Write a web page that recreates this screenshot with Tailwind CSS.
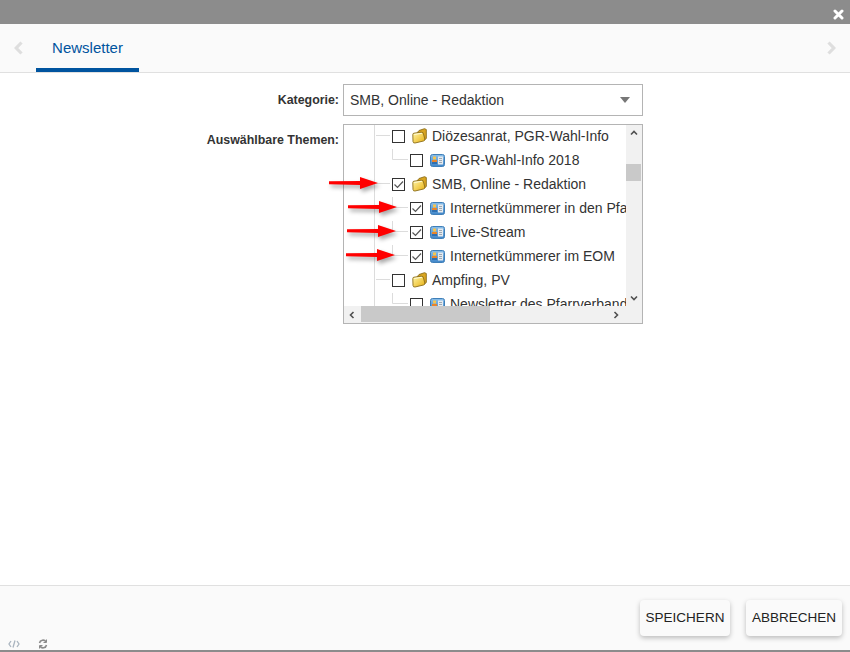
<!DOCTYPE html>
<html><head><meta charset="utf-8"><title>Newsletter</title>
<script src="https://cdn.jsdelivr.net/npm/@tailwindcss/browser@4"></script></head>
<body class="m-0 overflow-hidden bg-white">
<svg width="0" height="0" class="absolute"><defs>
<linearGradient id="fg" x1="0" y1="0" x2="1" y2="1"><stop offset="0" stop-color="#fff6a8"/><stop offset="1" stop-color="#e8b010"/></linearGradient>
<linearGradient id="bg" x1="0" y1="0" x2="0" y2="1"><stop offset="0" stop-color="#8cc0ea"/><stop offset="1" stop-color="#3f85c8"/></linearGradient>
<symbol id="folder" viewBox="0 0 15 16"><path d="M5 5 L7 2.500 L12.500 .7 L14.300 1.500 L14.300 10.500 L12.500 12 Z" fill="#d9a520" stroke="#8a6c18" stroke-width=".9"/><path d="M.8 6.500 Q.8 5.300 2 5.200 L9 4.200 Q11.500 4 11.500 6 L12.800 11 Q12.800 12.800 11.500 13 L3 15 Q1.200 15.300 1 13.500 Z" fill="url(#fg)" stroke="#8a6c18" stroke-width=".9"/><path d="M2.200 6.500 L10 5.300" stroke="#fffbd8" stroke-width="1"/></symbol>
<symbol id="nl" viewBox="0 0 15 13"><rect x="0.5" y="0.5" width="14" height="12" rx="2" fill="url(#bg)" stroke="#3f7fb8"/><rect x="8" y="2.500" width="5" height="8" fill="#e6eaee"/><path d="M9 4.500h3M9 6.500h3M9 8.500h3" stroke="#9aa8b4"/><rect x="3" y="2.500" width="3" height="3" fill="#f6c550"/><rect x="2" y="6" width="5" height="2" fill="#e8842c"/><rect x="2" y="8" width="5" height="2" fill="#2f6fb0"/></symbol>
<symbol id="chk" viewBox="0 0 13 13"><path d="M2.500 6.500 L5.500 9.500 L11 3.500" fill="none" stroke="#555" stroke-width="1.2"/></symbol>
<symbol id="arrow" viewBox="0 0 50 14"><path d="M0 5.300L31 5V1l18 6-18 6V9L0 8.300z" fill="#f00"/></symbol>
</defs></svg>

<div class="relative flex flex-col w-[850px] h-[652px] font-['Liberation_Sans',Arial,sans-serif] text-[#333]">
  <div class="h-6 shrink-0 bg-[#8c8c8c] relative">
    <svg class="absolute left-[833px] top-[9px]" width="11" height="11" viewBox="0 0 11 11"><path d="M2 2l7 7M9 2l-7 7" stroke="#fff" stroke-width="3" stroke-linecap="round"/></svg>
  </div>
  <div class="h-[49px] shrink-0 bg-[#fafafa] border-b border-[#e0e0e0] flex items-stretch justify-between">
    <div class="flex items-stretch">
      <svg class="ml-[14px] mt-[17px]" width="9" height="14" viewBox="0 0 9 14"><path d="M7.500 1.500L2.200 7l5.300 5.500" fill="none" stroke="#dedede" stroke-width="3.200"/></svg>
      <div class="ml-[13px] w-[103px] h-12 border-b-4 border-[#00549f] text-[#00549f] text-[15px] flex items-center justify-center pt-[5px]">Newsletter</div>
    </div>
    <svg class="mr-[14px] mt-[17px]" width="9" height="14" viewBox="0 0 9 14"><path d="M1.500 1.500L6.800 7l-5.300 5.500" fill="none" stroke="#dedede" stroke-width="3.200"/></svg>
  </div>

  <main class="flex-1 pt-[11px]">
    <div class="flex h-8">
      <div class="w-[339px] text-right text-[12.4px] font-bold leading-8 pb-1">Kategorie:</div>
      <div class="ml-1 w-[300px] border border-[#b4b4b4] flex items-center justify-between pl-1.5 pr-3 text-sm">
        <span>SMB, Online - Redaktion</span>
        <span class="w-0 h-0 border-x-[5px] border-t-[6px] border-x-transparent border-t-[#777]"></span>
      </div>
    </div>
    <div class="flex mt-2">
      <div class="w-[339px] text-right text-[12.4px] font-bold leading-[32px]">Auswählbare Themen:</div>
      <div class="relative ml-1 w-[300px] h-[200px] border border-[#b4b4b4] text-sm">
        <div class="absolute left-0 top-0 w-[282px] h-[181px] overflow-hidden">
          <svg class="absolute left-0 top-0" width="90" height="181" fill="none" stroke="#dcdcdc"><path d="M30.500 0V181M32 10.500H46M48.500 24V34.500H64M32 58.500H46M48.500 72V82.500H64M48.500 96V106.500H64M48.500 120V130.500H64M32 154.500H46M48.500 168V178.500H64"/></svg>
          <div class="relative -mt-px">
            <div class="flex items-center h-6 pl-12"><span class="shrink-0 w-[13px] h-[13px] border border-[#333] bg-white"></span><svg class="shrink-0 ml-[7px] mr-[5px]" width="15" height="16"><use href="#folder"/></svg><span class="whitespace-nowrap">Diözesanrat, PGR-Wahl-Info</span></div>
            <div class="flex items-center h-6 pl-[66px]"><span class="shrink-0 w-[13px] h-[13px] border border-[#333] bg-white"></span><svg class="shrink-0 ml-[7px] mr-[5px]" width="15" height="13"><use href="#nl"/></svg><span class="whitespace-nowrap">PGR-Wahl-Info 2018</span></div>
            <div class="flex items-center h-6 pl-12"><span class="shrink-0 w-[13px] h-[13px] border border-[#333] bg-white"><svg class="-m-px" width="13" height="13"><use href="#chk"/></svg></span><svg class="shrink-0 ml-[7px] mr-[5px]" width="15" height="16"><use href="#folder"/></svg><span class="whitespace-nowrap">SMB, Online - Redaktion</span></div>
            <div class="flex items-center h-6 pl-[66px]"><span class="shrink-0 w-[13px] h-[13px] border border-[#333] bg-white"><svg class="-m-px" width="13" height="13"><use href="#chk"/></svg></span><svg class="shrink-0 ml-[7px] mr-[5px]" width="15" height="13"><use href="#nl"/></svg><span class="whitespace-nowrap">Internetkümmerer in den Pfarreien</span></div>
            <div class="flex items-center h-6 pl-[66px]"><span class="shrink-0 w-[13px] h-[13px] border border-[#333] bg-white"><svg class="-m-px" width="13" height="13"><use href="#chk"/></svg></span><svg class="shrink-0 ml-[7px] mr-[5px]" width="15" height="13"><use href="#nl"/></svg><span class="whitespace-nowrap">Live-Stream</span></div>
            <div class="flex items-center h-6 pl-[66px]"><span class="shrink-0 w-[13px] h-[13px] border border-[#333] bg-white"><svg class="-m-px" width="13" height="13"><use href="#chk"/></svg></span><svg class="shrink-0 ml-[7px] mr-[5px]" width="15" height="13"><use href="#nl"/></svg><span class="whitespace-nowrap">Internetkümmerer im EOM</span></div>
            <div class="flex items-center h-6 pl-12"><span class="shrink-0 w-[13px] h-[13px] border border-[#333] bg-white"></span><svg class="shrink-0 ml-[7px] mr-[5px]" width="15" height="16"><use href="#folder"/></svg><span class="whitespace-nowrap">Ampfing, PV</span></div>
            <div class="flex items-center h-6 pl-[66px]"><span class="shrink-0 w-[13px] h-[13px] border border-[#333] bg-white"></span><svg class="shrink-0 ml-[7px] mr-[5px]" width="15" height="13"><use href="#nl"/></svg><span class="whitespace-nowrap">Newsletter des Pfarrverbandes</span></div>
          </div>
        </div>
        <div class="absolute left-[282px] top-0 w-[16px] h-[198px] bg-[#f1f1f1]">
          <svg class="absolute left-1 top-1" width="8" height="8" viewBox="0 0 8 8"><path d="M1 5.500L4 2.500l3 3" fill="none" stroke="#505050" stroke-width="1.6"/></svg>
          <div class="absolute left-0 top-[39px] w-[15px] h-[17px] bg-[#c9c9c9]"></div>
          <svg class="absolute left-1 top-[169px]" width="8" height="8" viewBox="0 0 8 8"><path d="M1 2.500L4 5.500l3-3" fill="none" stroke="#505050" stroke-width="1.6"/></svg>
        </div>
        <div class="absolute left-0 top-[181px] w-[282px] h-[17px] bg-[#f1f1f1]">
          <svg class="absolute left-1 top-[5px]" width="8" height="8" viewBox="0 0 8 8"><path d="M5.500 1L2.500 4l3 3" fill="none" stroke="#505050" stroke-width="1.6"/></svg>
          <div class="absolute left-[17px] top-0 w-[129px] h-[16px] bg-[#c9c9c9]"></div>
          <svg class="absolute left-[268px] top-[5px]" width="8" height="8" viewBox="0 0 8 8"><path d="M2.500 1L5.500 4l-3 3" fill="none" stroke="#505050" stroke-width="1.6"/></svg>
        </div>
      </div>
    </div>
  </main>

  <footer class="relative h-[67px] shrink-0 bg-[#fafafa] border-t border-[#e0e0e0] border-b-2 border-b-[#8c8c8c] flex justify-end items-start pt-[14px] pr-2 gap-4 text-[13.5px]">
    <button class="w-[90px] h-9 pt-px bg-[#fafafa] rounded-sm shadow-[0_2px_5px_rgba(0,0,0,0.25)] text-[#222]">SPEICHERN</button>
    <button class="w-[96px] h-9 pt-px bg-[#fafafa] rounded-sm shadow-[0_2px_5px_rgba(0,0,0,0.25)] text-[#222]">ABBRECHEN</button>
    <svg class="absolute left-[8px] top-[53px]" width="12" height="10" viewBox="0 0 12 10" fill="none" stroke="#a9b4bf" stroke-width="1.300"><path d="M3 2L1 5l2 3M9 2l2 3-2 3M7 1.500L5 8.500"/></svg>
    <svg class="absolute left-[38px] top-[53px]" width="10" height="10" viewBox="0 0 10 10" fill="none" stroke="#8a8a8a" stroke-width="1.6"><path d="M1.500 4A3.500 3.500 0 0 1 8 3M8.500 6A3.500 3.500 0 0 1 2 7"/><path d="M8.500 0.500v3h-3M1.500 9.500v-3h3" stroke-width="1"/></svg>
  </footer>

  <svg class="absolute left-[329px] top-[176px] drop-shadow-[2px_3px_2px_rgba(0,0,0,0.35)]" width="50" height="14"><use href="#arrow"/></svg>
  <svg class="absolute left-[348px] top-[200px] drop-shadow-[2px_3px_2px_rgba(0,0,0,0.35)]" width="50" height="14"><use href="#arrow"/></svg>
  <svg class="absolute left-[347px] top-[224px] drop-shadow-[2px_3px_2px_rgba(0,0,0,0.35)]" width="50" height="14"><use href="#arrow"/></svg>
  <svg class="absolute left-[346px] top-[248px] drop-shadow-[2px_3px_2px_rgba(0,0,0,0.35)]" width="50" height="14"><use href="#arrow"/></svg>
</div>
</body></html>
